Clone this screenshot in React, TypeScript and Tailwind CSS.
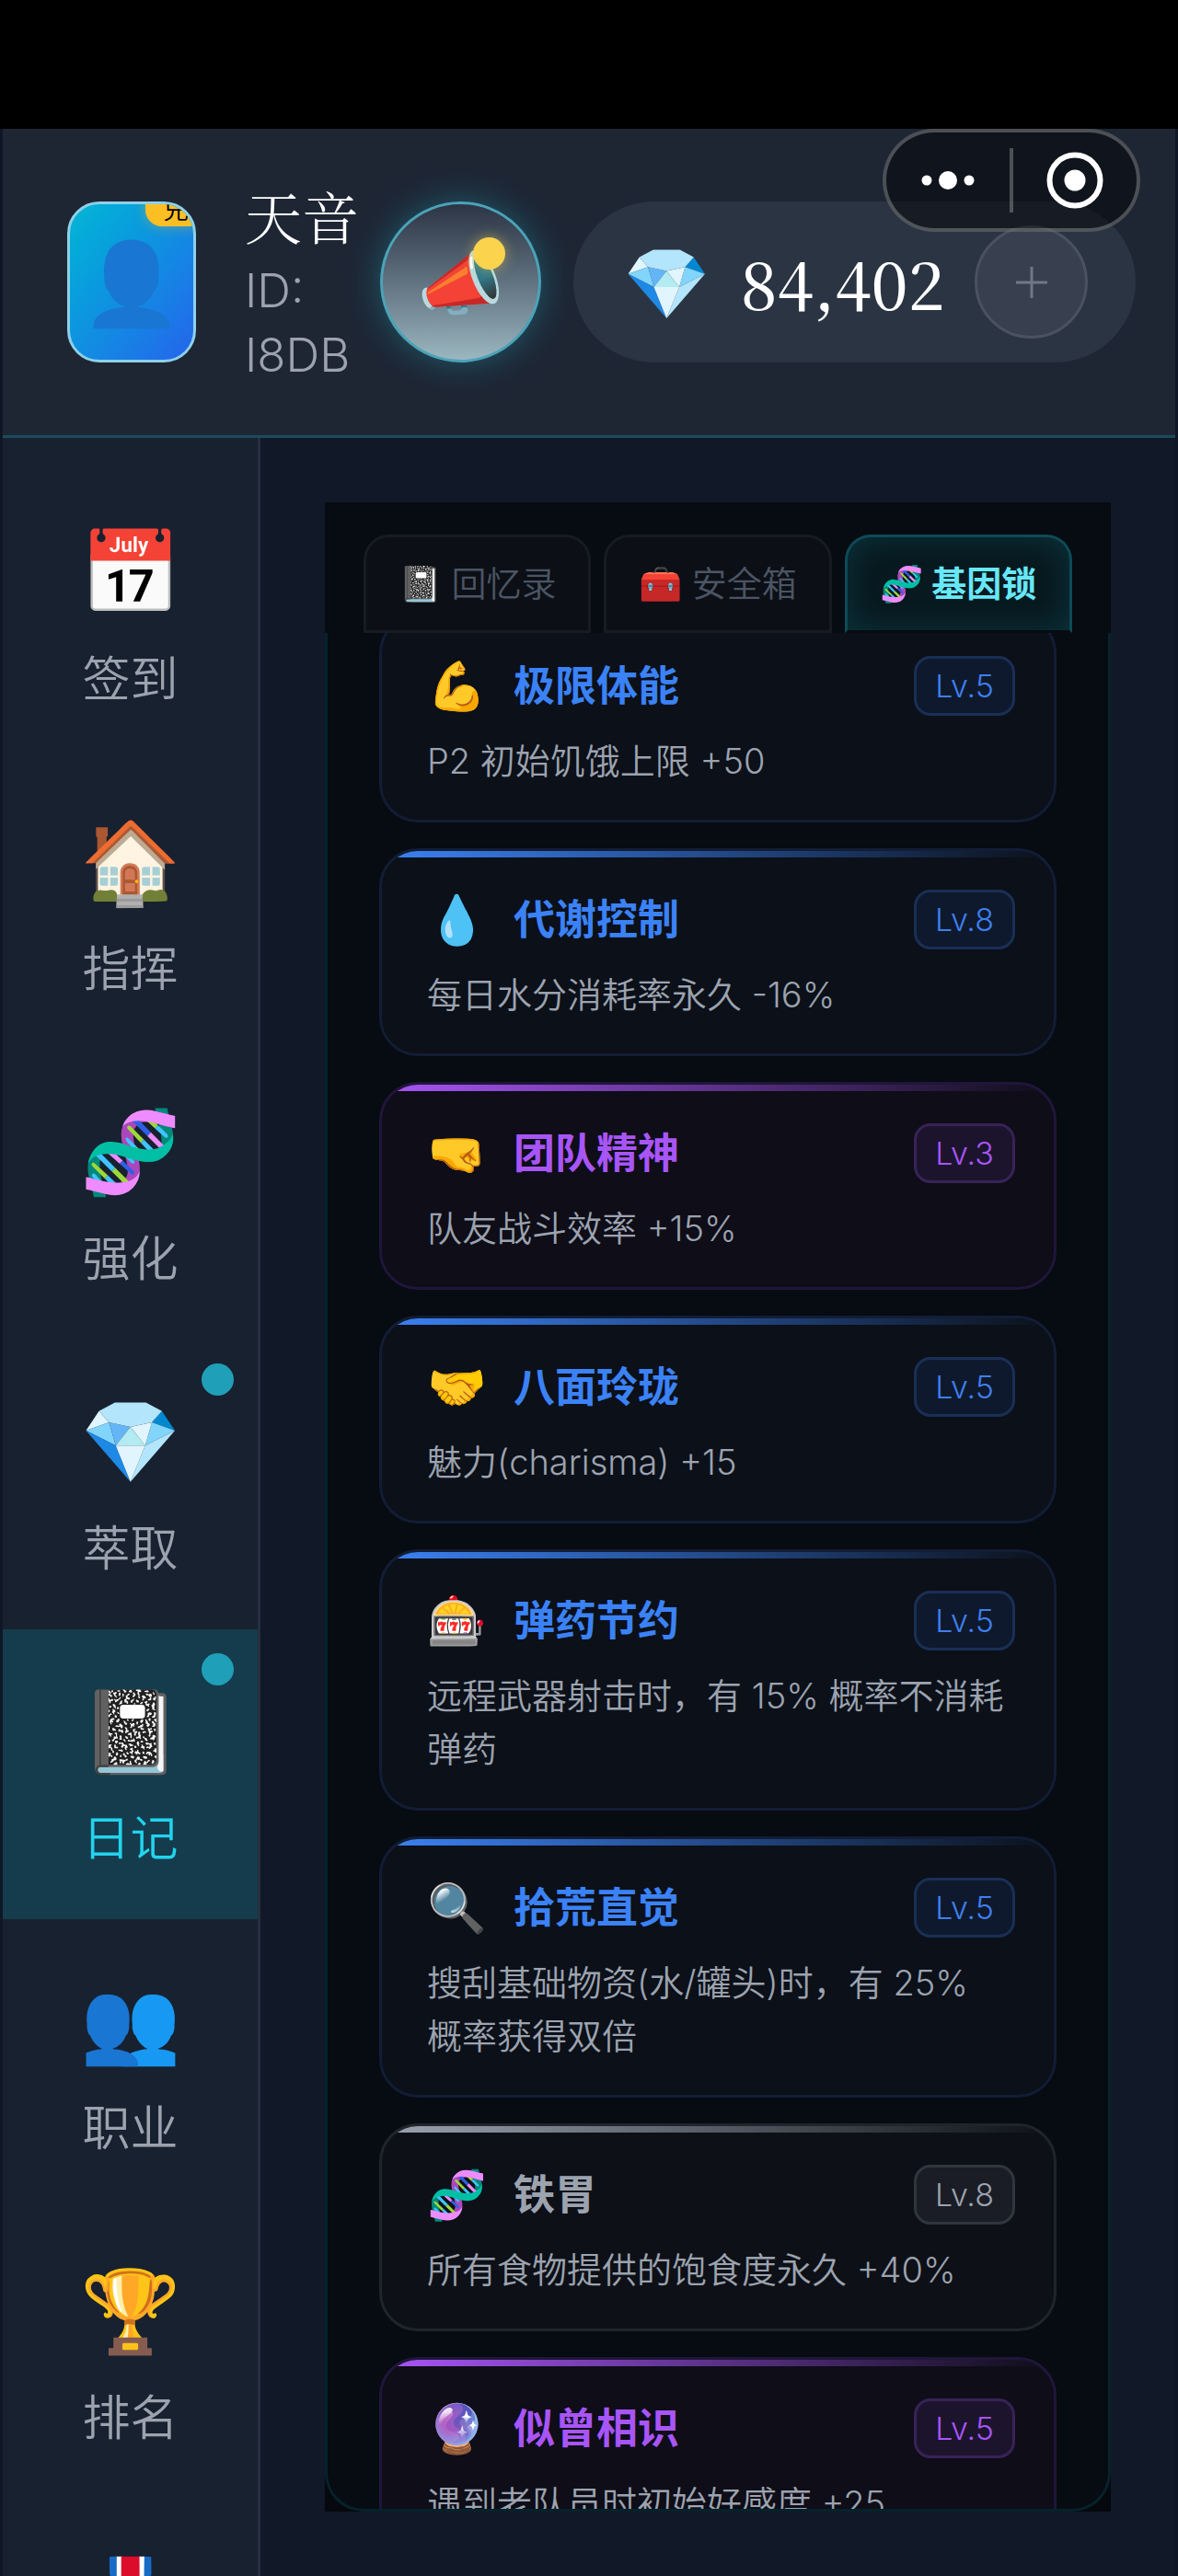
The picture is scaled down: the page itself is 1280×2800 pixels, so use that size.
type Tone = "blue" | "purple" | "gray";

const navItems = [
    { icon: "📅", label: "签到" },
    { icon: "🏠", label: "指挥" },
    { icon: "🧬", label: "强化" },
    { icon: "💎", label: "萃取", dot: true },
    { icon: "📓", label: "日记", dot: true, active: true },
    { icon: "👥", label: "职业" },
    { icon: "🏆", label: "排名" },
    { icon: "🎖️", label: "" },
];

const tabs = [
    { icon: "📓", label: "回忆录" },
    { icon: "🧰", label: "安全箱" },
    { icon: "🧬", label: "基因锁", active: true },
];

// \u2060 keeps 概率 together when the line wraps
const genes: { icon: string; name: string; level: number; desc: string; tone: Tone }[] = [
    { icon: "💪", name: "极限体能", level: 5, desc: "P2 初始饥饿上限 +50", tone: "blue" },
    { icon: "💧", name: "代谢控制", level: 8, desc: "每日水分消耗率永久 -16%", tone: "blue" },
    { icon: "🤜", name: "团队精神", level: 3, desc: "队友战斗效率 +15%", tone: "purple" },
    { icon: "🤝", name: "八面玲珑", level: 5, desc: "魅力(charisma) +15", tone: "blue" },
    { icon: "🎰", name: "弹药节约", level: 5, desc: "远程武器射击时，有 15% 概率不消耗弹药", tone: "blue" },
    { icon: "🔍", name: "拾荒直觉", level: 5, desc: "搜刮基础物资(水/罐头)时，有 25% 概\u2060率获得双倍", tone: "blue" },
    { icon: "🧬", name: "铁胃", level: 8, desc: "所有食物提供的饱食度永久 +40%", tone: "gray" },
    { icon: "🔮", name: "似曾相识", level: 5, desc: "遇到老队员时初始好感度 +25", tone: "purple" },
];

const tones: Record<Tone, { card: string; bar: string; title: string; badge: string }> = {
    blue: {
        card: "border-[#121d35] bg-[#0b1019]",
        bar: "from-[#3b82f6]",
        title: "text-[#3b82f6]",
        badge: "border-[#1a2f55] bg-[#0e192d] text-[#3f7fee]",
    },
    purple: {
        card: "border-[#20163a] bg-[#0e0d18]",
        bar: "from-[#a855f7]",
        title: "text-[#a855f7]",
        badge: "border-[#382257] bg-[#1c142d] text-[#a855f7]",
    },
    gray: {
        card: "border-[#20242c] bg-[#0d1017]",
        bar: "from-[#9ca3af]",
        title: "text-[#9ca3af]",
        badge: "border-[#31353d] bg-[#1a1d25] text-[#9ca3af]",
    },
};

const Header = () => (
    <header className="relative flex h-[336px] shrink-0 items-center border-b-3 border-[#1b4b5d] bg-[#1e2634] pr-[43px] pl-[70px]">
        <button className="relative flex h-[175px] w-[140px] shrink-0 items-center justify-center overflow-hidden rounded-[35px] border-3 border-[#8ed0e8] bg-linear-to-br from-[#06b6d4] to-[#2563eb]" aria-label="头像">
            <span className="text-[88px] leading-none">👤</span>
            <span className="absolute -top-[18px] -right-[14px] flex h-[42px] w-[66px] items-end justify-center rounded-[18px] bg-[#fbbf24] pb-1 text-[28px] leading-none text-black shadow-[0_0_14px_rgba(251,191,36,0.4)]">兑</span>
        </button>
        <div className="ml-[53px] w-[147px] shrink-0">
            <div className="font-[Noto_Serif_CJK_SC,Noto_Serif_SC,Noto_Sans_CJK_SC,serif] text-[62px] leading-[84px] text-white">天音</div>
            <div className="mt-1 w-[120px] text-[51px] leading-[70px] text-[#9ca3af]">ID: I8DB</div>
        </div>
        <button className="relative flex size-[175px] shrink-0 items-center justify-center rounded-full border-3 border-[#4ba3b8] bg-linear-to-b from-[#2d3545] to-[#9bb7c0] text-[76px] leading-none shadow-[0_0_35px_rgba(34,211,238,0.3)]" aria-label="公告">
            📣
            <span className="absolute top-9 right-9 size-[35px] rounded-full bg-[#fcd34d] shadow-[0_0_14px_rgba(252,211,77,0.5)]" />
        </button>
        <div className="ml-[35px] flex h-[175px] flex-1 items-center justify-between rounded-full bg-[#2b3442] pr-[52px] pl-[54px]">
            <span className="text-[76px] leading-none">💎</span>
            <span className="font-[Noto_Serif_CJK_SC,Liberation_Serif,serif] text-[70px] leading-none font-medium text-white">84,402</span>
            <button className="flex size-[123px] items-center justify-center rounded-full border-3 border-[#4a5160] bg-[#384050]" aria-label="充值">
                <svg width="36" height="36" viewBox="0 0 36 36" stroke="#707786" strokeWidth="3">
                    <path d="M18 1v34M1 18h34" />
                </svg>
            </button>
        </div>
        <div className="absolute top-0 right-[38px] flex h-28 w-[280px] items-center rounded-full border-4 border-white/25 bg-black/45">
            <button className="flex flex-1 justify-center" aria-label="更多">
                <svg width="60" height="24" viewBox="0 0 60 24" fill="#fff">
                    <circle cx="7" cy="12" r="5.5" />
                    <circle cx="30" cy="12" r="10" />
                    <circle cx="53" cy="12" r="5.5" />
                </svg>
            </button>
            <span className="h-[70px] w-1 bg-white/25" />
            <button className="flex flex-1 justify-center" aria-label="关闭">
                <svg width="62" height="62" viewBox="0 0 62 62">
                    <circle cx="31" cy="31" r="27.5" fill="none" stroke="#fff" strokeWidth="6" />
                    <circle cx="31" cy="31" r="11.5" fill="#fff" />
                </svg>
            </button>
        </div>
    </header>
);

const Sidebar = () => (
    <nav className="w-[280px] shrink-0 overflow-hidden border-r-3 border-[#262f3f] bg-[#18212f] pt-[35px]">
        {navItems.map((item) => (
            <a
                key={item.icon}
                href="#"
                className={`relative flex h-[315px] flex-col items-center pt-[60px] ${item.active ? "bg-[#153c4d] text-[#22d3ee]" : "text-[#9ca3af]"}`}
            >
                <span className="text-[88px] leading-[100px]">{item.icon}</span>
                <span className="mt-8 text-[52px] leading-[72px]">{item.label}</span>
                {item.dot && <span className="absolute top-[26px] right-[26px] size-[35px] rounded-full bg-[#209fb8]" />}
            </a>
        ))}
    </nav>
);

const GeneCard = ({ gene }: { gene: (typeof genes)[number] }) => {
    const tone = tones[gene.tone];
    return (
        <article className={`relative shrink-0 overflow-hidden rounded-[42px] border-3 pt-[39px] pr-[42px] pb-[35px] pl-[49px] ${tone.card}`}>
            <span className={`absolute inset-x-0 top-0 h-[7px] bg-linear-to-r to-transparent ${tone.bar}`} />
            <div className="flex h-[71px] items-center">
                <span className="w-[94px] text-[52px] leading-none">{gene.icon}</span>
                <h3 className={`flex-1 text-[45px] leading-[60px] font-bold ${tone.title}`}>{gene.name}</h3>
                <span className={`flex h-[65px] w-[110px] items-center justify-center rounded-[18px] border-3 text-[34px] leading-none ${tone.badge}`}>
                    Lv.{gene.level}
                </span>
            </div>
            <p className="mt-[17px] text-[38px] leading-[58px] text-[#9ca3af]">{gene.desc}</p>
        </article>
    );
};

const App = () => {
    return (
        <div lang="zh-CN" className="flex h-screen flex-col overflow-hidden bg-[#0f1726] font-[Inter,Noto_Sans_CJK_SC,sans-serif] font-[350]">
            <div className="h-[140px] shrink-0 bg-black" />
            <div className="mx-[3px] flex min-h-0 flex-1 flex-col bg-[#111827]">
                <Header />
                <div className="flex min-h-0 flex-1">
                    <Sidebar />
                    <main className="flex min-w-0 flex-1 flex-col p-[70px]">
                        <div className="flex gap-[14px] bg-[#070b12] px-[42px] pt-[35px]">
                            {tabs.map((tab) => (
                                <button
                                    key={tab.label}
                                    className={`h-[107px] flex-1 rounded-t-[28px] border-3 text-[38px] whitespace-nowrap ${tab.active
                                        ? "border-[#0d4b57] border-b-[#070b12] bg-[#08191f] font-bold text-[#67e8f9] shadow-[inset_0_0_35px_rgba(34,211,238,0.15)]"
                                        : "border-[#181b22] bg-[#0c0f16] text-[#4b5563]"}`}
                                >
                                    {tab.icon} {tab.label}
                                </button>
                            ))}
                        </div>
                        <div className="flex min-h-0 flex-1 bg-[#05080d]">
                            <section className="flex-1 overflow-hidden rounded-b-[42px] border-3 border-t-0 border-[#06222b] bg-[#070b12] px-14">
                                <div className="-mt-5 flex flex-col gap-7">
                                    {genes.map((gene) => (
                                        <GeneCard key={gene.name} gene={gene} />
                                    ))}
                                </div>
                            </section>
                        </div>
                    </main>
                </div>
            </div>
        </div>
    );
};

export default App;
